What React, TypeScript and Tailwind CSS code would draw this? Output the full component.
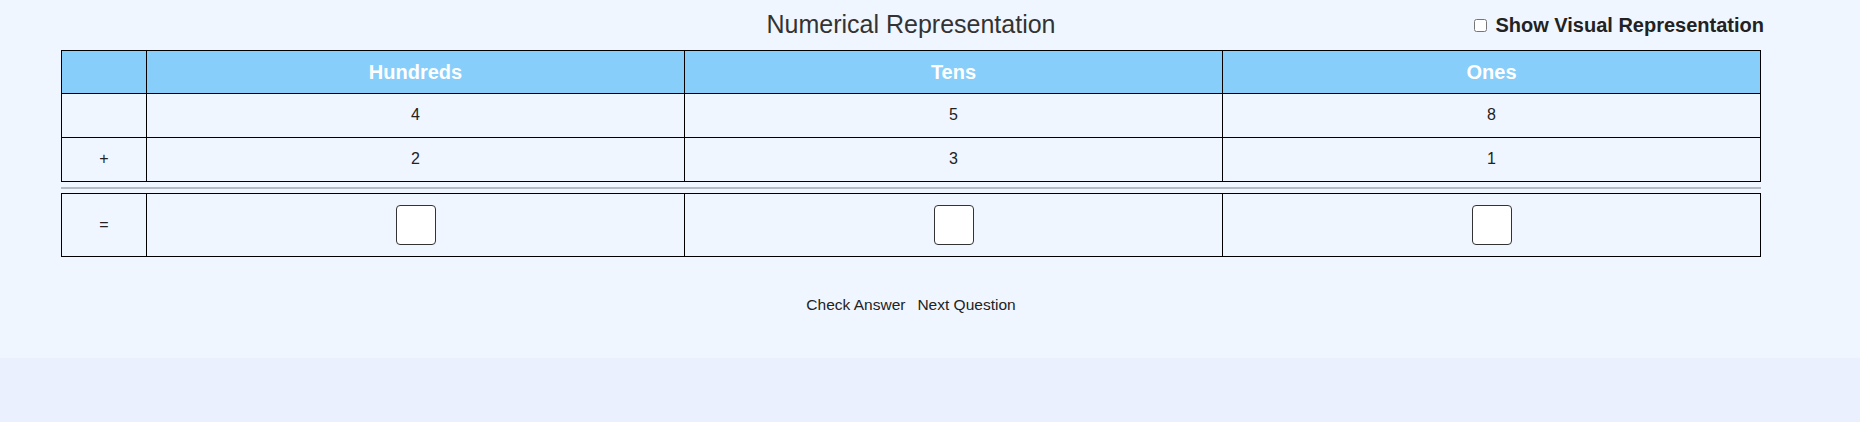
import React, { useState } from 'react';

const PLACES = ["Hundreds", "Tens", "Ones"];
const FIRST = [4, 5, 8];
const SECOND = [2, 3, 1];

export default function App() {
    const [showVisual, setShowVisual] = useState(false);
    const [answers, setAnswers] = useState<string[]>(["", "", ""]);

    return (
        <div className="min-h-[422px] bg-[#eaf0fd] font-['Liberation_Sans',Arial,sans-serif]">
            <div className="h-[358px] bg-[#eff6ff] pl-[61px]">
                <div className="w-[1700px]">
                    {/* title row */}
                    <div className="grid h-[50px] grid-cols-[1fr_auto_1fr] items-start pt-[10px]">
                        <div />
                        <h2 className="text-[25px] font-normal leading-[28px] text-[#333]">Numerical Representation</h2>
                        <label className="-mr-[3px] flex items-center justify-end gap-[8px] pt-[1px] text-[20px] font-bold leading-[28px] text-[#222]">
                            <input
                                type="checkbox"
                                className="m-0 h-[13px] w-[13px]"
                                checked={showVisual}
                                onChange={(e) => setShowVisual(e.target.checked)}
                            />
                            Show Visual Representation
                        </label>
                    </div>

                    <table className="w-[1700px] table-fixed border-collapse text-[16px] text-[#222]">
                        <colgroup>
                            <col className="w-[85px]" />
                            <col />
                            <col />
                            <col />
                        </colgroup>
                        <thead>
                            <tr className="h-[43px] bg-[#87cefa]">
                                <th className="border border-black" />
                                {PLACES.map((p) => (
                                    <th key={p} className="border border-black text-[20px] font-bold text-white">
                                        {p}
                                    </th>
                                ))}
                            </tr>
                        </thead>
                        <tbody>
                            <tr className="h-[44px]">
                                <td className="border border-black text-center" />
                                {FIRST.map((n, i) => (
                                    <td key={i} className="border border-black pb-[2px] text-center">{n}</td>
                                ))}
                            </tr>
                            <tr className="h-[44px]">
                                <td className="border border-black pb-[2px] text-center">+</td>
                                {SECOND.map((n, i) => (
                                    <td key={i} className="border border-black pb-[2px] text-center">{n}</td>
                                ))}
                            </tr>
                        </tbody>
                    </table>

                    <div className="mb-[4px] mt-[5px] h-[2px] w-[1700px] bg-[#b5bac2]" />

                    <table className="w-[1700px] table-fixed border-collapse text-[16px] text-[#222]">
                        <colgroup>
                            <col className="w-[85px]" />
                            <col />
                            <col />
                            <col />
                        </colgroup>
                        <tbody>
                            <tr className="h-[63px]">
                                <td className="border border-black text-center">=</td>
                                {answers.map((a, i) => (
                                    <td key={i} className="border border-black text-center">
                                        <input
                                            type="text"
                                            value={a}
                                            onChange={(e) => {
                                                const next = [...answers];
                                                next[i] = e.target.value;
                                                setAnswers(next);
                                            }}
                                            className="h-[40px] w-[40px] rounded-[4px] border border-[#333] bg-white text-center align-middle text-[18px]"
                                        />
                                    </td>
                                ))}
                            </tr>
                        </tbody>
                    </table>

                    <div className="mt-[38px] flex justify-center gap-[12px]">
                        <button className="text-[15.5px] leading-[20px] text-[#222]">Check Answer</button>
                        <button className="text-[15.5px] leading-[20px] text-[#222]">Next Question</button>
                    </div>
                </div>
            </div>
        </div>
    );
}
